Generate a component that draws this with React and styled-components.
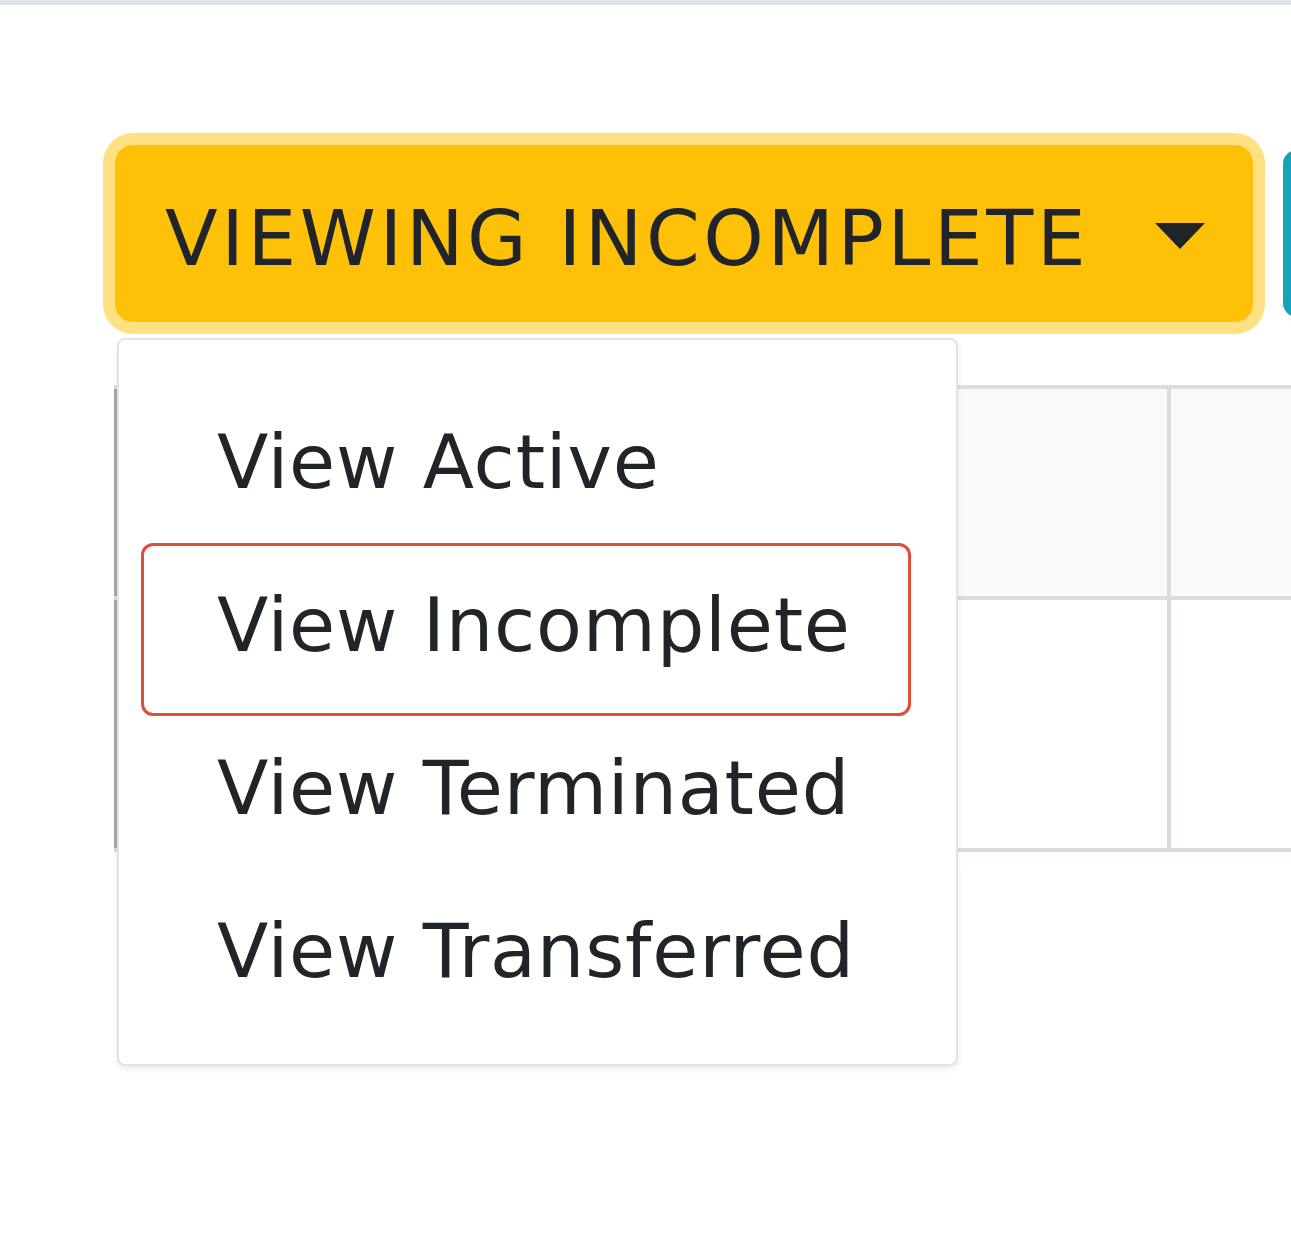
import React from 'react'
import styled, {createGlobalStyle} from 'styled-components'

const GlobalStyle = createGlobalStyle`
    body {
        margin: 0;
        background: #ffffff;
        font-family: "DejaVu Sans", "Noto Sans", sans-serif;
        color: #212529;
    }
`

const items = ['View Active', 'View Incomplete', 'View Terminated', 'View Transferred']

export default function App() {
    return (
        <Page>
            <GlobalStyle/>
            <TopBar/>
            <Main>
                <Toolbar>
                    <Dropdown>
                        <ToggleButton>
                            VIEWING INCOMPLETE
                            <Caret/>
                        </ToggleButton>
                        <Menu>
                            {items.map((label, i) => (
                                <MenuItem key={label} focused={i === 1}>
                                    {label}
                                </MenuItem>
                            ))}
                        </Menu>
                    </Dropdown>
                    <InfoButton/>
                </Toolbar>
                <Table>
                    <thead>
                        <tr>
                            <HeadCell first/>
                            <HeadCell/>
                        </tr>
                    </thead>
                    <tbody>
                        <tr>
                            <BodyCell first/>
                            <BodyCell/>
                        </tr>
                    </tbody>
                </Table>
            </Main>
        </Page>
    )
}

const Page = styled.div`
    width: 1291px;
    height: 1234px;
    overflow: hidden;
`
const TopBar = styled.div`
    height: 5px;
    background: #dfe2e6;
`
const Main = styled.div`
    padding: 140px 0 0 115px;
`
const Toolbar = styled.div`
    display: flex;
    align-items: center;
    gap: 30px;
    height: 177px;
`
const Dropdown = styled.div`
    position: relative;
    z-index: 2;
`
const ToggleButton = styled.button`
    display: flex;
    align-items: center;
    gap: 66px;
    box-sizing: border-box;
    width: 1138px;
    height: 177px;
    padding: 9px 50px 0 50px;
    border: none;
    border-radius: 18px;
    background: #ffc107;
    box-shadow: 0 0 0 12px #ffe083;
    color: #212529;
    font-family: "DejaVu Sans", "Noto Sans", sans-serif;
    font-size: 77px;
    letter-spacing: 3.6px;
    white-space: nowrap;
`
const Caret = styled.span`
    width: 0;
    height: 0;
    margin-top: -4px;
    border-top: 26px solid #212529;
    border-left: 25px solid transparent;
    border-right: 25px solid transparent;
`
const InfoButton = styled.button`
    flex: none;
    width: 200px;
    height: 167px;
    border: none;
    border-radius: 14px;
    background: #17a2b8;
`
const Menu = styled.div`
    position: absolute;
    top: calc(100% + 16px);
    left: 2px;
    box-sizing: border-box;
    width: 841px;
    height: 728px;
    padding: 45px 50px 0 27px;
    background: #ffffff;
    border: 2px solid #e3e3e3;
    border-radius: 8px;
    box-shadow: 0 3px 6px rgba(0, 0, 0, 0.08);
`
const MenuItem = styled.div`
    display: flex;
    align-items: center;
    height: 163px;
    box-sizing: border-box;
    padding: 0 0 10px 71px;
    border-radius: 7px;
    outline: ${props => (props.focused ? '3px solid #e04d3b' : 'none')};
    outline-offset: 2px;
    font-size: 75px;
    letter-spacing: 0.8px;
    color: #212529;
    white-space: nowrap;
`
const Table = styled.table`
    margin: 63px 0 0 -1px;
    width: 1400px;
    border-collapse: collapse;
    border-left: 3px solid #a9a9a9;
`
const HeadCell = styled.th`
    width: ${props => (props.first ? '1050px' : 'auto')};
    height: 207px;
    padding: 0;
    background: #f8f9fa;
    border: 4px solid #dadde0;
    border-left: ${props => (props.first ? 'none' : '4px solid #dadde0')};
`
const BodyCell = styled.td`
    height: 248px;
    padding: 0;
    border: 4px solid #dadde0;
    border-left: ${props => (props.first ? 'none' : '4px solid #dadde0')};
`
